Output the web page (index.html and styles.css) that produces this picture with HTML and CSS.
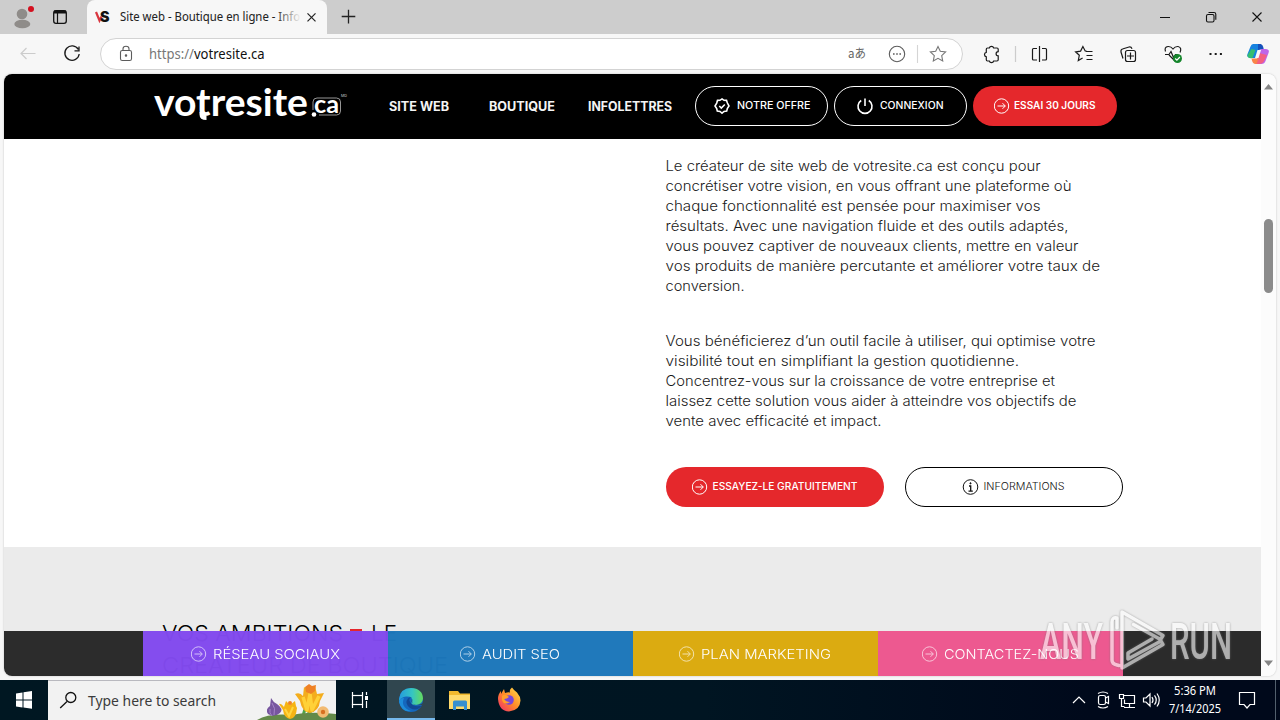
FILE: index.html
```html
<!DOCTYPE html>
<html lang="fr">
<head>
<meta charset="utf-8">
<title>Site web - Boutique en ligne - Infolettres</title>
<link rel="stylesheet" href="styles.css">
</head>
<body>
<svg class="defs" width="0" height="0">
  <symbol id="arrow" viewBox="0 0 16 16"><circle cx="7.500" cy="8" r="7.200"/><path d="M3.500 8h7.700M8.500 5.200 11.300 8 8.500 10.800"/></symbol>
</svg>
<div class="screen">
  <div class="tabbar">
    <svg class="profile" width="87" height="34" viewBox="0 0 87 34">
      <circle cx="22" cy="14" r="5.3" fill="#8f8c89"/><ellipse cx="22.3" cy="24" rx="8" ry="4.3" fill="#8f8c89"/>
      <circle cx="31" cy="9" r="3" fill="#d4101f"/>
      <rect x="53.7" y="10.7" width="12.6" height="12.6" rx="2.3" fill="none" stroke="#111" stroke-width="1.3"/><path d="M54 12h12" stroke="#111" stroke-width="3"/><path d="M57.5 12v11" stroke="#111" stroke-width="1.2"/>
    </svg>
    <div class="tab">
      <svg width="240" height="34" viewBox="0 0 240 34">
        <path d="M9 12l3.500 8.500 2-4" fill="none" stroke="#d93640" stroke-width="2.200"/>
        <text class="vs" x="13" y="22" textLength="9.500" lengthAdjust="spacingAndGlyphs">S</text>
        <defs><linearGradient id="fade" gradientUnits="userSpaceOnUse" x1="188" x2="214" y1="0" y2="0"><stop stop-color="#222"/><stop offset="1" stop-color="#f7f7f7"/></linearGradient></defs>
        <text class="ui" x="33" y="21" font-size="12.2" fill="url(#fade)" textLength="180" lengthAdjust="spacingAndGlyphs">Site web - Boutique en ligne - Info</text>
        <path d="M220.500 13.300l8 8m0-8l-8 8" stroke="#222" stroke-width="1.2"/>
      </svg>
    </div>
    <svg class="plus" width="44" height="34" viewBox="0 0 44 34"><path d="M21.500 9.800v13.600M14.700 16.500h13.600" stroke="#222" stroke-width="1.3"/></svg>
    <svg class="winctl" width="130" height="34" viewBox="1150 0 130 34" fill="none" stroke="#111" stroke-width="1.1">
      <path d="M1160 17.500h10M1252.500 12.500l9 9m0-9l-9 9"/><rect x="1206.500" y="14.500" width="7.500" height="7.500" rx="1.500"/><path d="M1208.500 12.500h5.500q1.800 0 1.800 1.800v5.500"/>
    </svg>
  </div>
  <div class="toolbar">
    <svg width="100" height="40" viewBox="0 34 100 40" fill="none">
      <path d="M35.500 53.500H21m5.500-5.500L21 53.500l5.500 5.500" stroke="#ccc" stroke-width="1.2"/>
      <path d="M78.300 49.500A7.200 7.200 0 1 0 79.200 54M79 46.500v4.300h-4.500" stroke="#1a1a1a" stroke-width="1.3"/>
    </svg>
    <div class="address">
      <svg width="861" height="30" viewBox="101 39 861 30" fill="none" stroke="#5c5c5c" stroke-width="1.1">
        <rect x="120.500" y="50.500" width="11" height="10" rx="1.800"/><path d="M123 50.500v-1.700q0-2.600 3-2.600t3 2.600v1.700"/><circle cx="126" cy="55.500" r=".7" fill="#555"/>
        <text class="ui" x="149" y="59" font-size="13.500" fill="#777" stroke="none" textLength="115.500" lengthAdjust="spacingAndGlyphs">https://<tspan fill="#111">votresite.ca</tspan></text>
        <text class="cjk" x="848" y="58" font-size="12.500" fill="#666" stroke="none" textLength="18" lengthAdjust="spacingAndGlyphs">aあ</text>
        <circle cx="897" cy="54" r="7.700"/><path d="M893 54h1.600m1.600 0h1.600m1.600 0h1.600" stroke-width="1.600"/><path d="M917.500 45v18" stroke="#d5d5d5"/>
        <path d="M938 46.500l2.300 4.800 5.300.7-3.900 3.600 1 5.300-4.700-2.600-4.700 2.600 1-5.300-3.900-3.600 5.300-.7z" stroke="#777"/>
      </svg>
    </div>
    <svg width="317" height="40" viewBox="963 34 317 40" fill="none" stroke="#1a1a1a" stroke-width="1.200">
      <path d="M987.500 48h1.800a2.300 2.300 0 0 1 4.400 0h3.300q1.200 0 1.200 1.200v2.500a2.100 2.100 0 0 0 0 4.200v3.900q0 1.200-1.200 1.200h-3.300a2.300 2.300 0 0 1-4.400 0h-1.800q-1.200 0-1.200-1.200v-3a2.300 2.300 0 0 1 0-4.500v-3.100q0-1.200 1.200-1.200z"/>
      <path d="M1015.500 46v16" stroke="#ccc"/>
      <path d="M1037 48.500h-3.500q-1 0-1 1v9.500q0 1 1 1h3.500m5-11.500h3.500q1 0 1 1v9.500q0 1-1 1h-3.500M1039.500 46v16"/>
      <path d="M1086.500 51.200l-1.300-.2-2.300-4.500-2.300 4.600-5 .7 3.700 3.500-1 5.200 4.300-2.400M1086 51.500h6.500M1086.500 55.500h6M1086.500 59.500h6"/>
      <rect x="1125.500" y="50.500" width="10" height="11" rx="2"/><path d="M1130.500 52.500v7M1127 56h7M1123 58.500l-2-6.500q-.4-2.500 1.500-3l6.500-2q2.200-.4 3 1.800"/>
      <path d="M1175 61l-6-6m-3.500-3.500q-1.500-4.500 2.500-5 3-.2 5 2.500 2-2.700 5-2.500 4.200 1 2 6M1165 54.500h4l2-3 2.500 6 2-3h2"/>
      <circle cx="1177.500" cy="58.500" r="4.500" fill="#15862c" stroke="none"/><path d="M1175.200 58.500l1.700 1.700 3-3.200" stroke="#fff"/>
      <path d="M1209.500 54h2m3.200 0h2m3.200 0h2" stroke-width="2"/>
      <g stroke="none"><path d="M1253 44h8l-4 14h-6q-5-.5-3.500-4l3-7.500q.8-2.500 2.500-2.500z" fill="#1682df"/><path d="M1247.500 55q2-3 4-6l4 1-3 8q-5 1-5-3z" fill="#35bd70"/><path d="M1258 44h2.500q2.500.5 3.200 5l-5.700 1z" fill="#1651bb"/><path d="M1261 49h5q4 .5 2.500 4l-3 8q-1 3-4 3h-6z" fill="#bf65e8"/><path d="M1259 53l8 2-3.500 7q-2 2-4 2h-4z" fill="#f45f82"/><path d="M1251.500 58.500h7l-2 5.500q-4 .7-5-5.500z" fill="#fa8549"/><path d="M1257.500 50h3.500l-2.500 8h-3.500z" fill="#f7f7f7"/></g>
    </svg>
  </div>
  <div class="viewport">
    <main class="page">
      <header class="header">
        <svg class="logo" width="198" height="65" viewBox="150 74 198 65">
          <text class="brand" x="154" y="116" textLength="154" lengthAdjust="spacingAndGlyphs">votresite</text>
          <path d="M201.500 112v2.500q0 3.500 5 3.500" fill="none" stroke="#fff" stroke-width="4"/>
          <circle cx="314" cy="114.500" r="2.300" fill="#fff"/><path d="M313 110v-8q0-4 4-4h19.500q4 0 4 4v9q0 4-4 4H319" fill="none" stroke="#bbb" stroke-width=".8"/>
          <text class="brand-ca" x="314" y="113" textLength="25" lengthAdjust="spacingAndGlyphs">ca</text>
          <text class="md" x="341" y="97" textLength="6" lengthAdjust="spacingAndGlyphs">MD</text>
        </svg>
        <nav class="nav">
          <svg width="60" height="16"><text y="12" textLength="60" lengthAdjust="spacingAndGlyphs">SITE WEB</text></svg>
          <svg width="66" height="16"><text y="12" textLength="66" lengthAdjust="spacingAndGlyphs">BOUTIQUE</text></svg>
          <svg width="84" height="16"><text y="12" textLength="84" lengthAdjust="spacingAndGlyphs">INFOLETTRES</text></svg>
        </nav>
        <div class="actions">
          <a class="pill outline small offer"><svg width="16" height="16" viewBox="0 0 16 16" class="ico bold"><path d="M8 .9l2 1.400 2.500.1.800 2.400L15 8l-1.700 2.600-.6 2.500-2.700.3L8 15.100l-2-1.600-2.700-.4-.6-2.500L1 8l1.700-2.900.8-2.700L6 2.300z"/><path d="M5.300 8l2 2 3.500-3.500"/></svg><svg width="74" height="14"><text y="10" textLength="73.500" lengthAdjust="spacingAndGlyphs">NOTRE OFFRE</text></svg></a>
          <a class="pill outline small power"><svg width="16" height="16" viewBox="0 0 16 16" class="ico bold"><path d="M8 .5v7.500M4.200 2.500A7 7 0 1 0 11.800 2.500"/></svg><svg width="64" height="14"><text y="10" textLength="63.500" lengthAdjust="spacingAndGlyphs">CONNEXION</text></svg></a>
          <a class="pill red small trial"><svg width="16" height="16" class="ico"><use href="#arrow"/></svg><svg width="82" height="14"><text y="10" textLength="81.500" lengthAdjust="spacingAndGlyphs">ESSAI 30 JOURS</text></svg></a>
        </div>
      </header>
      <section class="intro">
        <div class="copy">
          <svg width="440" height="140" viewBox=".5 -.5 440 140">
            <text y="15" textLength="375" lengthAdjust="spacingAndGlyphs">Le créateur de site web de votresite.ca est conçu pour</text>
            <text y="35" textLength="406" lengthAdjust="spacingAndGlyphs">concrétiser votre vision, en vous offrant une plateforme où</text>
            <text y="55" textLength="375" lengthAdjust="spacingAndGlyphs">chaque fonctionnalité est pensée pour maximiser vos</text>
            <text y="75" textLength="403" lengthAdjust="spacingAndGlyphs">résultats. Avec une navigation fluide et des outils adaptés,</text>
            <text y="95" textLength="413" lengthAdjust="spacingAndGlyphs">vous pouvez captiver de nouveaux clients, mettre en valeur</text>
            <text y="115" textLength="434.500" lengthAdjust="spacingAndGlyphs">vos produits de manière percutante et améliorer votre taux de</text>
            <text y="135" textLength="79" lengthAdjust="spacingAndGlyphs">conversion.</text>
          </svg>
          <svg width="440" height="100" viewBox=".5 -.5 440 100">
            <text y="15" textLength="430" lengthAdjust="spacingAndGlyphs">Vous bénéficierez d’un outil facile à utiliser, qui optimise votre</text>
            <text y="35" textLength="353.500" lengthAdjust="spacingAndGlyphs">visibilité tout en simplifiant la gestion quotidienne.</text>
            <text y="55" textLength="389.500" lengthAdjust="spacingAndGlyphs">Concentrez-vous sur la croissance de votre entreprise et</text>
            <text y="75" textLength="411" lengthAdjust="spacingAndGlyphs">laissez cette solution vous aider à atteindre vos objectifs de</text>
            <text y="95" textLength="216" lengthAdjust="spacingAndGlyphs">vente avec efficacité et impact.</text>
          </svg>
        </div>
        <div class="cta">
          <a class="pill red wide"><svg width="16" height="16" class="ico"><use href="#arrow"/></svg><svg width="146" height="14"><text x="-.5" y="10" textLength="145" lengthAdjust="spacingAndGlyphs">ESSAYEZ-LE GRATUITEMENT</text></svg></a>
          <a class="pill light wide"><svg width="16" height="16" viewBox="0 0 16 16" class="ico"><circle cx="7.500" cy="8" r="7.300"/><circle cx="7.500" cy="4.300" r=".6" fill="#111"/><path d="M6 7h1.700v5M5.500 12.200h4.300" stroke-width="1.300"/></svg><svg width="82" height="14"><text x="-.5" y="10" textLength="81" lengthAdjust="spacingAndGlyphs">INFORMATIONS</text></svg></a>
        </div>
      </section>
      <section class="ambitions">
        <svg width="300" height="60">
          <text y="20" textLength="181" lengthAdjust="spacingAndGlyphs">VOS AMBITIONS</text><rect x="188" y="8" width="12" height="11" fill="#e5262b"/><text x="209" y="20" textLength="26" lengthAdjust="spacingAndGlyphs">LE</text>
          <text y="52" textLength="286" lengthAdjust="spacingAndGlyphs">CRÉATEUR DE BOUTIQUE</text>
        </svg>
      </section>
      <div class="bottombar">
        <a class="seg purple"><svg width="16" height="16" class="ico"><use href="#arrow"/></svg><svg width="127" height="20"><text y="15" textLength="127" lengthAdjust="spacingAndGlyphs">RÉSEAU SOCIAUX</text></svg></a>
        <a class="seg blue"><svg width="16" height="16" class="ico"><use href="#arrow"/></svg><svg width="80" height="20"><text y="15" textLength="78" lengthAdjust="spacingAndGlyphs">AUDIT SEO</text></svg></a>
        <a class="seg gold"><svg width="16" height="16" class="ico"><use href="#arrow"/></svg><svg width="132" height="20"><text y="15" textLength="130" lengthAdjust="spacingAndGlyphs">PLAN MARKETING</text></svg></a>
        <a class="seg pink"><svg width="16" height="16" class="ico"><use href="#arrow"/></svg><svg width="135" height="20"><text y="15" textLength="135" lengthAdjust="spacingAndGlyphs">CONTACTEZ-NOUS</text></svg></a>
      </div>
    </main>
    <svg class="scroll" width="15" height="602" viewBox="0 0 15 602"><path d="M3 15.500l4.500-5.500 4.500 5.500zM3 586.500h9l-4.500 5.500z" fill="#858585"/><rect x="3" y="145" width="9" height="74" rx="4.500" fill="#8b8b8b"/></svg>
  </div>
  <footer class="taskbar">
    <svg width="48" height="40" viewBox="0 680 48 40"><path d="M16 693.500l6.500-1v7H16zm7.500-1.200 8.500-1.200v8.400h-8.500zM16 700.500h6.500v7l-6.500-1zm7.500 0H32v8.200l-8.500-1.200z" fill="#fff"/></svg>
    <div class="search">
      <svg width="288" height="40" viewBox="48 680 288 40">
        <circle cx="70.800" cy="697.500" r="5" fill="none" stroke="#111" stroke-width="1.300"/><path d="M67 701.500l-6.800 6.500" stroke="#111" stroke-width="1.300"/>
        <text class="ui" x="88" y="706" font-size="14.500" fill="#3b3b3b" textLength="128" lengthAdjust="spacingAndGlyphs">Type here to search</text>
        <path d="M304 720q-2-8 4-15M294 720q-1-6-4-9M303 719l12-12" stroke="#4da449" stroke-width="3" fill="none"/>
        <path d="M257 720q12-7 35-5 18-4 44-1v6z" fill="#648a49"/>
        <path d="M271 698q2 4 6 6 7 5 3 9-6 5-12 1-3-5 2-8z" fill="#77569f"/><path d="M272 703q4 5 2 12M270 709q-1 4 2 7" stroke="#a584c8" fill="none"/>
        <path d="M279 704q2-1 5 3l2-6 4 4 5-4 1 5 1 2q-1 11-7 11-6-1-7-9z" fill="#f6b414"/><path d="M285 709l4 7 4-9" stroke="#ffd640" stroke-width="2" fill="none"/>
        <path d="M295 694q5-2 8 2l1-9 6 4 5-5 2 8 7-1-4 8q-1 10-10 12-8-1-10-12z" fill="#f4ad1c"/><path d="M303 697l4 13 3-16 2 16 7-14" stroke="#ffd138" stroke-width="3.500" fill="none" stroke-linejoin="round"/><path d="M305 687l4-3 3 2 4-1-1 6-4 3-5-2z" fill="#ef8125"/><circle cx="290" cy="703" r="2" fill="#ef8125"/>
        <circle cx="323" cy="712" r="5.800" fill="#f2bb72"/><circle cx="323" cy="712" r="2.200" fill="#d87021"/>
      </svg>
    </div>
    <svg width="51" height="40" viewBox="336 680 51 40" fill="none" stroke="#fff" stroke-width="1.200"><path d="M352.500 692v3.500h10V692M352.500 708v-3.500h10v3.500M366.500 692v3M366.500 701v7"/><rect x="352.500" y="695.500" width="10" height="9"/><path d="M366.500 696v4" stroke-width="3"/></svg>
    <div class="task active">
      <svg width="48" height="40" viewBox="387 680 48 40"><defs><linearGradient id="eg" x1="0" x2="1"><stop stop-color="#249bde"/><stop offset=".55" stop-color="#35c5c3"/><stop offset="1" stop-color="#65db5c"/></linearGradient></defs>
      <circle cx="411" cy="700" r="12" fill="#1467bd"/><path d="M399 699q1.500-11 12-11 11.500.5 12 10.500-.5 6.500-8 6.500-5 0-3-3 1.500-6-6-5.500-5 .5-7 4.500z" fill="url(#eg)"/><path d="M404 698q-4 9 7 13-9 2-12-9 0-4 5-4z" fill="#1d8cda"/><path d="M412 697q-4 1-2 5 4 6 12 3.500-5 6.500-12 2.500-6-5-2-9.500 2-1.800 4-1.500z" fill="#124894"/><path d="M412.500 699q-2 3 1 5 4 2 9 .8l.8-2.500q-2 3-7.500 2.700-5-.5-3.300-6z" fill="#30464f"/></svg>
    </div>
    <svg width="100" height="40" viewBox="435 680 100 40">
      <path d="M449 691h9l2 2.500h10V709h-21z" fill="#f2b92e"/><path d="M449 695h21v14h-21z" fill="#ffda6c"/><path d="M453 710v-8q0-1.500 1.500-1.500h11q1.500 0 1.500 1.500v8h-3v-3.500h-8v3.500z" fill="#388fcf"/>
      <defs><linearGradient id="fg" x1="1" x2="0" y1="0" y2="1"><stop stop-color="#ffe34b"/><stop offset=".5" stop-color="#ff8c28"/><stop offset="1" stop-color="#ef2670"/></linearGradient></defs>
      <path d="M498 699q0-5 3-8v3l3-5 1 4q3-1 5-.5-1-3 2-5 2 3 5 5 3.500 4 3.500 8-.5 10-11.500 11-10-.5-11-12.500z" fill="url(#fg)"/><circle cx="509" cy="700" r="4.800" fill="#7847d8"/><path d="M502 696q3-3 7 1-2 2-5 2 2 3 6 3-6 4-8-2z" fill="#ff9f2a"/>
    </svg>
    <svg class="tray" width="220" height="40" viewBox="1060 680 220 40" fill="none" stroke="#fff" stroke-width="1.200">
      <path d="M1073 703l6-6 6 6"/><rect x="1098.500" y="695.500" width="7" height="9" rx="1.800"/><path d="M1105.500 698l3-1.500v7l-3-1.500M1098 693.500q5-3 10 0M1098 706.500q5 3 10 0"/>
      <path d="M1124 695.500h10.500v8h-10v-4M1129.500 703.500v4M1124 707.500h11M1119.500 694.500h4v4h-4zM1121.500 698.500v8h3"/>
      <path d="M1143.500 698h2.500l4-4v12l-4-4h-2.500zM1152 697q2 3 0 6M1154.500 695.300q3.500 4.700 0 9.400M1157 693.500q4.500 6.500 0 13"/>
      <text class="ui" x="1174" y="695" textLength="42" lengthAdjust="spacingAndGlyphs" font-size="12">5:36 PM</text><text class="ui" x="1169" y="713" textLength="52" lengthAdjust="spacingAndGlyphs" font-size="12">7/14/2025</text>
      <path d="M1239.500 692.500h15v12h-4.500l-3 3.500-3-3.500h-4.500z"/><path d="M1275.500 680v40" stroke="#52606d" stroke-width="1"/>
    </svg>
  </footer>
  <svg class="watermark" width="200" height="70" viewBox="1036 605 200 70">
    <text x="1040" y="659" textLength="63" lengthAdjust="spacingAndGlyphs">ANY</text><text x="1170" y="659" textLength="62" lengthAdjust="spacingAndGlyphs">RUN</text>
    <g fill="none" stroke-linejoin="round" stroke-linecap="round" stroke-width="3.500"><path d="M1117 628v-10q-5-1-5 4v38q0 4 5 5l2 .5M1122 651v-39l41 23.500-2.500 4-27-15M1122 651v17l41-23.500-2-3.500-33 18v-6l24-14"/></g>
  </svg>
</div>
</body>
</html>
```
FILE: styles.css
```css
* { box-sizing: border-box; }
body { margin: 0; font-family: Inter, "Open Sans", sans-serif; }
svg { display: block; flex: none; overflow: visible; }
.defs { position: absolute; }
.screen { position: relative; width: 1280px; height: 720px; display: flex; flex-direction: column; background: #f7f7f7; overflow: hidden; }
.ui { font-family: "Noto Sans", "Open Sans", sans-serif; }
.cjk { font-family: "Noto Sans CJK JP", sans-serif; }
.vs { font: 900 14px Inter, sans-serif; fill: #111; }

.tabbar { height: 34px; flex: none; display: flex; background: #cdcdcd; }
.tab { width: 240px; height: 34px; background: #f7f7f7; border-radius: 8px 8px 0 0; }
.winctl { margin-left: auto; }
.toolbar { height: 40px; flex: none; display: flex; }
.address { width: 863px; height: 32px; margin-top: 4px; border: 1px solid #d3d3d3; border-radius: 16px; background: #fff; }

.viewport { display: flex; height: 602px; margin: 0 4px; border-radius: 8px; overflow: hidden; background: #fcfcfc; box-shadow: 0 0 2px #bbb; flex: none; }
.page { position: relative; width: 1257px; background: #fff; overflow: hidden; flex: none; }
.scroll { background: #fcfcfc; }

.header { height: 65px; background: #000; display: flex; align-items: flex-start; padding-left: 146px; color: #fff; }
.brand { font: 700 38px Lato, sans-serif; fill: #fff; }
.brand-ca { font: 700 25px Lato, sans-serif; fill: #fff; }
.md { font: 4px Inter, sans-serif; fill: #ccc; }
.nav { display: flex; margin: 25px 0 0 41px; }
.nav text { font-size: 12.5px; font-weight: 700; fill: #f4f4f4; }
.nav svg + svg { margin-left: 40px; }
.nav svg:last-child { margin-left: 33px; }
.actions { display: flex; gap: 6px; margin: 12px 0 0 23px; }

.pill { height: 40px; border-radius: 20px; display: flex; align-items: center; justify-content: center; color: #fff; }
.pill text { font-size: 9.7px; font-weight: 500; fill: currentColor; }
.small { width: 133px; justify-content: flex-start; gap: 7px; }
.outline { border: 1px solid #fff; }
.offer { padding-left: 18px; }
.power { padding-left: 22px; }
.trial { width: 144px; padding-left: 21px; gap: 4px; }
.trial text { font-weight: 600; }
.red { background: #e5282c; }
.light { color: #111; border: 1px solid #000; }
.light text { font-weight: 300; }
.wide { width: 218px; gap: 5px; }
.ico { fill: none; stroke: currentColor; stroke-width: 1; }
.bold { stroke-width: 1.6; }

.intro { height: 408px; padding: 16px 0 0 662px; }
.copy { display: flex; flex-direction: column; gap: 35px; }
.copy text { font-size: 14px; font-weight: 350; fill: #1a1a1a; }
.cta { display: flex; gap: 21px; margin-top: 37px; }

.ambitions { height: 129px; background: #ebebeb; padding: 74px 0 0 158px; }
.ambitions text { font-size: 22px; font-weight: 300; fill: #000; }

.bottombar { position: absolute; left: 0; right: 0; bottom: 0; height: 45px; background: #282828; display: flex; padding-left: 139px; opacity: .98; }
.seg { width: 245px; display: flex; align-items: center; justify-content: center; gap: 6px; color: #fff; }
.seg text { font-size: 13.6px; font-weight: 350; fill: #fff; }
.seg .ico { opacity: .65; }
.purple { background: #824aee; }
.blue { background: #1c77bb; }
.gold { background: #dbaa0d; }
.pink { background: #ee578f; }

.taskbar { height: 40px; margin-top: 4px; flex: none; display: flex; background: linear-gradient(90deg, #001722 0, #001522 55%, #00091b 85%, #00091b); }
.search { width: 288px; background: #f2f2f2; border-top: 1px solid #b9b9bf; height: 40px; overflow: hidden; }
.search svg { margin-top: -1px; }
.task { width: 48px; height: 40px; }
.active { background: #30464f; box-shadow: inset 0 -2px #76b9ed; }
.tray { margin-left: auto; }
.tray text { fill: #fff; stroke: none; }

.watermark { position: absolute; left: 1036px; top: 605px; opacity: .62; filter: drop-shadow(0 0 1px #777); }
.watermark text { font: 500 50px Roboto, sans-serif; fill: #fff; }
.watermark g { stroke: #fff; }
```
